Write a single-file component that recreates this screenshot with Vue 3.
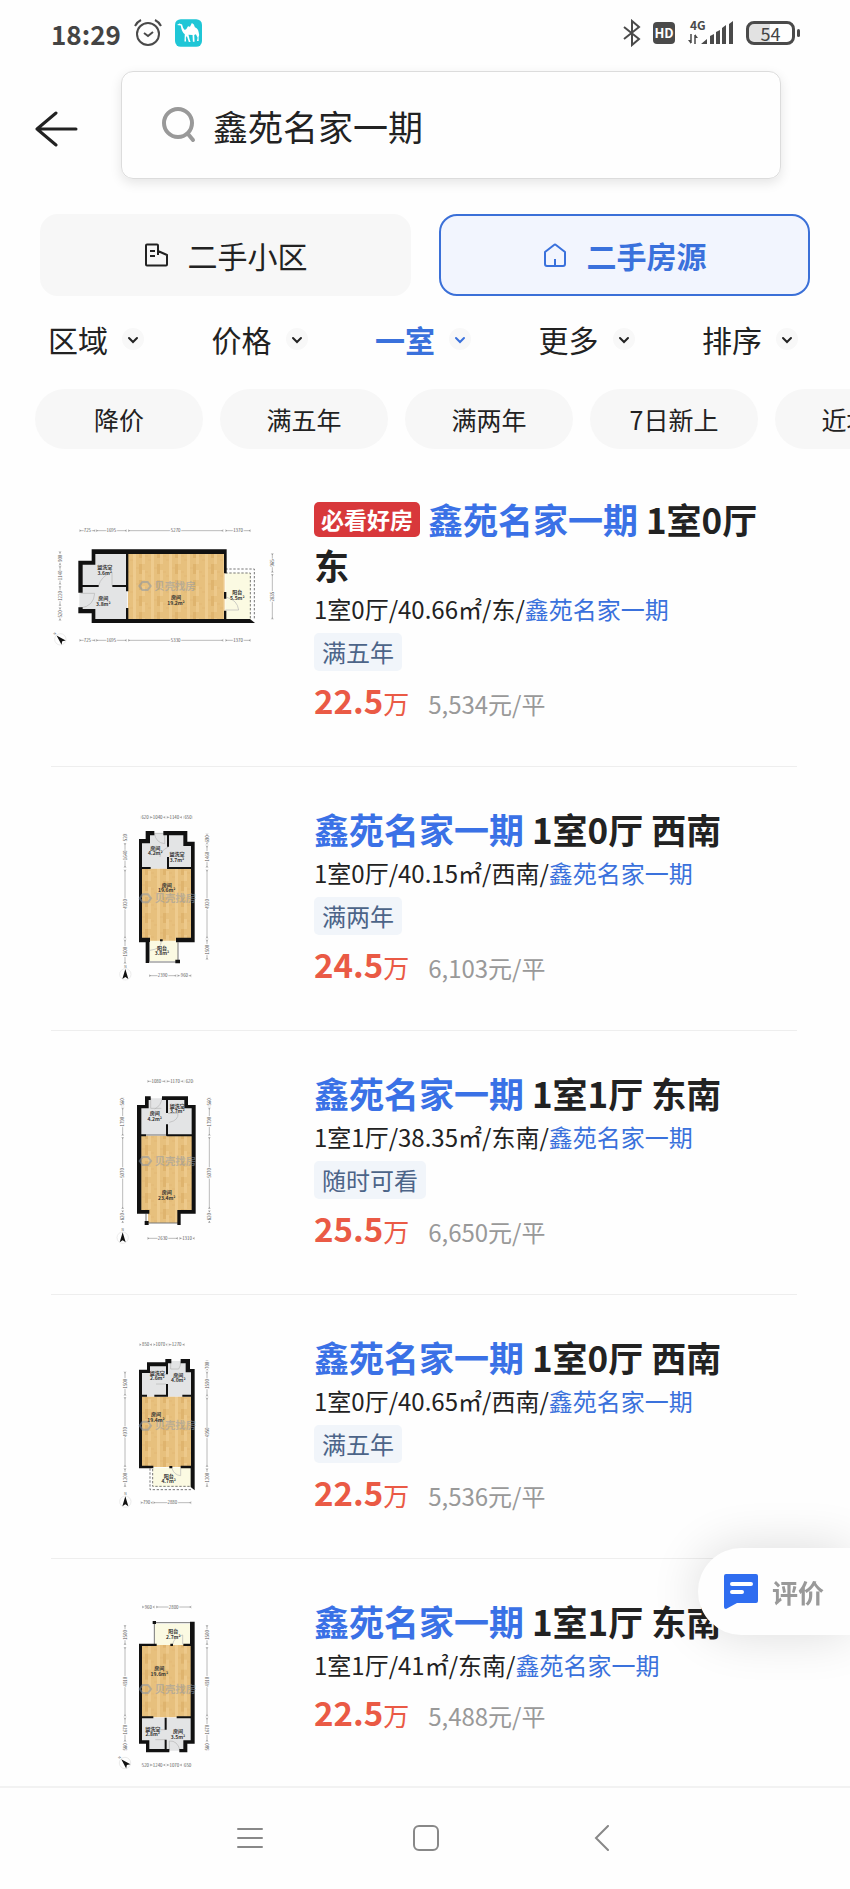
<template>
  <div class="page">
    <!-- Status bar -->
    <div class="status-bar">
      <span class="time">18:29</span>
      <svg class="status-icon" viewBox="0 0 28 28" width="28" height="28" fill="none" stroke="#4a4a4a" stroke-width="2">
        <circle cx="14" cy="15" r="11" />
        <path d="M10 14l4 3 5-4M1 7q2-4 6-6M27 7q-2-4-6-6" />
      </svg>
      <svg class="status-icon" viewBox="0 0 80 82" width="27" height="28">
        <rect width="80" height="82" rx="17" fill="#1fc6d6" />
        <path d="M6 17l7-4 8 3q2 12 8 16 6-2 9-10 4-2 6 1l6-12q7 3 9 13 9 3 11 14 3 9 0 15v12h-5l2-10-5-10-5 2 1 20h-5l-1-20-12-1 3 13 3 9h-5l-6-18-3 5 1 11h-5l1-21q-9-6-12-26z" fill="#fff" />
      </svg>
      <span class="spacer"></span>
      <svg viewBox="0 0 18 28" width="18" height="28" fill="none" stroke="#4a4a4a" stroke-width="2">
        <path d="M1 8l15 12-7 6V2l7 6L1 20" />
      </svg>
      <span class="hd">HD</span>
      <svg viewBox="0 0 48 28" width="48" height="28" fill="#4a4a4a">
        <text x="3" y="11" font-size="12" font-weight="700">4G</text>
        <path d="M4 15v9M8 16v9" stroke="#4a4a4a" stroke-width="1.5" />
        <path d="M1 21h3v4zM8 15l3 4H8zM14 25l6-5v5zM23 17l4-2v10h-4zM29 13l4-2v14h-4zM35 9l4-3v19h-4zM42 5l4-3v23h-4z" />
      </svg>
      <div class="battery"><span>54</span></div>
    </div>

    <!-- Search -->
    <header class="search-row">
      <button type="button" class="back-btn" aria-label="返回">
        <svg viewBox="0 0 44 38" width="44" height="38" fill="none" stroke="#222" stroke-width="3" stroke-linecap="round" stroke-linejoin="round">
          <path d="M21 3L2 19l19 16M2 19h39" />
        </svg>
      </button>
      <label class="search-box">
        <svg viewBox="0 0 34 36" width="34" height="36" fill="none" stroke="#999" stroke-width="4" stroke-linecap="round">
          <circle cx="16" cy="16" r="14" />
          <path d="M26 27l5 6" />
        </svg>
        <input v-model="keyword" type="text" aria-label="搜索" />
      </label>
    </header>

    <!-- Tabs -->
    <nav class="tabs">
      <button type="button" class="tab" :class="{ active: activeTab === 'community' }" @click="activeTab = 'community'">
        <svg viewBox="0 0 24 24" width="24" height="24" fill="none" stroke="currentColor" stroke-width="2" stroke-linejoin="round">
          <path d="M14 12V2.500q0-1-1-1H3q-1 0-1 1v19q0 1 1 1h19q1 0 1-1V12l-9-4M6 8h5M6 13h5" />
        </svg>
        二手小区
      </button>
      <button type="button" class="tab" :class="{ active: activeTab === 'house' }" @click="activeTab = 'house'">
        <svg viewBox="0 0 24 24" width="24" height="24" fill="none" stroke="currentColor" stroke-width="2" stroke-linejoin="round">
          <path d="M2 9l9-7q1-1 2 0l9 7v12q0 2-2 2H4q-2 0-2-2zM12 16v6" />
        </svg>
        二手房源
      </button>
    </nav>

    <!-- Filters -->
    <div class="filters">
      <label v-for="filter in filters" :key="filter" class="filter" :class="{ selected: filter === '一室' }">
        <select :aria-label="filter">
          <option>{{ filter }}</option>
        </select>
        <svg viewBox="0 0 22 22" width="22" height="22" fill="none">
          <circle cx="11" cy="11" r="11" fill="#f8f8f8" />
          <path d="M7 10l4 4 4-4" stroke="currentColor" stroke-width="2" stroke-linecap="round" />
        </svg>
      </label>
    </div>

    <!-- Quick tags -->
    <div class="chips">
      <button v-for="chip in chips" :key="chip" type="button" class="chip">{{ chip }}</button>
    </div>

    <!-- House list -->
    <ul class="house-list">
      <li v-for="(house, index) in houses" :key="index" class="house">
        <svg class="plan" :viewBox="house.plan.box" role="img" aria-label="户型图">
          <defs>
            <pattern :id="'wood' + index" width="54" height="48" patternUnits="userSpaceOnUse">
              <rect width="54" height="48" fill="#e7c07d" />
              <rect x="9" width="9" height="48" fill="#eecb8e" />
              <rect x="27" width="9" height="30" fill="#dfb46e" />
              <rect x="36" y="18" width="9" height="30" fill="#edc98b" />
              <path d="M18 12h9M0 36h9M45 24h9" stroke="#d8ab65" />
            </pattern>
          </defs>
          <path :d="house.plan.tile" fill="#e3e4e5" />
          <path :d="house.plan.balcony" fill="#fbfae2" />
          <path :d="house.plan.wood" :fill="'url(#wood' + index + ')'" />
          <path :d="house.plan.doors" fill="none" stroke="#b5b5b5" stroke-width="2" />
          <path :d="house.plan.rail" fill="none" stroke="#777" stroke-width="3" :stroke-dasharray="house.plan.dashed ? '7 5' : 'none'" />
          <path :d="house.plan.walls" fill="#111" />
          <g :transform="`translate(${house.plan.mark})`" opacity="0.5">
            <path d="M-17 0L-8 -12H8L17 0 8 12H-8Z" fill="none" stroke="#8294aa" stroke-width="6" />
            <text x="28" y="11" font-size="31" font-weight="700" fill="#8c98a8">贝壳找房</text>
          </g>
          <g v-for="room in house.plan.rooms" :key="room.join()" text-anchor="middle" font-size="15" font-weight="700" fill="#333">
            <text :x="room[0]" :y="room[1]">{{ room[2] }}</text>
            <text :x="room[0]" :y="room[1] + 16">{{ room[3] }}</text>
          </g>
          <g v-for="dim in house.plan.dims" :key="dim.join()" :transform="`translate(${dim[0]} ${dim[1]}) rotate(${dim[2]})`">
            <path :d="`M0 0H${dim[3]}`" stroke="#999" stroke-width="2" />
            <path :d="`M0 -3L5 0 0 3M${dim[3]} -3l-5 3 5 3`" fill="none" stroke="#666" />
            <text :x="dim[3] / 2" y="5" text-anchor="middle" font-size="13" class="dim-text">{{ dim[4] }}</text>
          </g>
          <g :transform="house.plan.compass">
            <circle r="17" fill="none" stroke="#e3e3e3" stroke-width="2" />
            <path d="M0 -16L9 14 0 8 -9 14Z" fill="#111" />
            <text y="-20" text-anchor="middle" font-size="10" fill="#555">N</text>
          </g>
        </svg>

        <div class="info">
          <h3 class="title">
            <span v-if="house.badge" class="badge">{{ house.badge }}</span>
            <a href="#"><em>鑫苑名家一期</em> {{ house.title }}</a>
          </h3>
          <p class="desc">{{ house.desc }}/<a href="#">鑫苑名家一期</a></p>
          <span v-if="house.tag" class="tag">{{ house.tag }}</span>
          <p class="price">
            <strong>{{ house.total }}</strong><span class="unit">万</span>
            <span class="avg">{{ house.avg }}元/平</span>
          </p>
        </div>
      </li>
    </ul>

    <button type="button" class="feedback">
      <svg viewBox="0 0 34 35" width="34" height="35">
        <path d="M2 0h30q2 0 2 2v25q0 2-2 2H13L2 35q-2 0-2-2V2q0-2 2-2z" fill="#2f6df0" />
        <path d="M8 10h19M8 18h10" stroke="#fff" stroke-width="4" stroke-linecap="round" />
      </svg>
      评价
    </button>

    <!-- System navigation -->
    <footer class="system-nav">
      <button type="button" aria-label="菜单">
        <svg viewBox="0 0 26 26" width="26" height="26"><path d="M1 4h24M1 13h24M1 22h24" /></svg>
      </button>
      <button type="button" aria-label="主页">
        <svg viewBox="0 0 26 26" width="26" height="26"><rect x="1" y="1" width="24" height="24" rx="5" /></svg>
      </button>
      <button type="button" aria-label="后退">
        <svg viewBox="0 0 26 26" width="26" height="26"><path d="M19 1L7 13l12 12" /></svg>
      </button>
    </footer>
  </div>
</template>

<script setup>
import { ref } from 'vue';

const keyword = ref('鑫苑名家一期');
const activeTab = ref('house');

const filters = ['区域', '价格', '一室', '更多', '排序'];
const chips = ['降价', '满五年', '满两年', '7日新上', '近地铁'];

// Floor plans: rooms are [x, y, name, area], dims are [x, y, angle, length, value]
const planEast = {
  box: '33 -6 696 528',
  tile: 'M122 188H160V156H262V360H160V330H118V260H122Z',
  balcony: 'M556 218H632V360H556Z',
  wood: 'M264 160H554V360H264Z',
  doors: 'M122 280H164Q162 318 122 324M176 257Q182 230 216 216V257M556 330H596Q592 300 560 292',
  rail: 'M556 207H643V360M556 219H631V358',
  dashed: true,
  walls: 'M155 148H560V220H552V162H166V194H128V278H115V182H155ZM115 322H128V327H166V357H630L645 369H155V340H115ZM258 160h7v114h-7ZM258 324h7v36h-7ZM126 255h50v6h-50ZM217 255h44v6h-44ZM552 276h7v20h-7ZM552 332h7v28h-7Z',
  mark: '315 258',
  rooms: [[194, 208, '盥洗室', '3.6m²'], [190, 301, '房间', '3.8m²'], [408, 298, '房间', '19.2m²'], [592, 283, '阳台', '5.5m²']],
  dims: [
    [118, 92, 0, 48, '725'], [168, 92, 0, 92, '1695'], [264, 92, 0, 286, '5270'], [556, 92, 0, 76, '1370'],
    [118, 421, 0, 48, '725'], [168, 421, 0, 92, '1695'], [264, 421, 0, 286, '5330'], [556, 421, 0, 76, '1370'],
    [60, 196, -90, 42, '900'], [60, 254, -90, 56, '1140'], [60, 318, -90, 60, '1220'], [60, 362, -90, 40, '520'],
    [697, 218, -90, 58, '965'], [697, 358, -90, 136, '2835']
  ],
  compass: 'translate(61 418) rotate(-45)'
};

const planSouthwest = {
  box: '-147 21 696 528',
  tile: 'M120 120H144V96H255V128H278V203H120Z',
  balcony: 'M145 416H234V480H145Z',
  wood: 'M124 203H275V419H124Z',
  doors: 'M163 97H194V128Q168 126 163 97M205 138Q180 150 180 168M184 420Q184 444 150 448',
  rail: 'M146 483H238M148 424V482M234 424V480',
  dashed: false,
  walls: 'M117 114H137V90H163V103H150V127H126V410H150V424H117ZM190 90H262V122H284V424H228V410H273V135H250V103H190ZM201 97h6v40h-6ZM201 168h6v34h-6ZM124 198h28v6h-28ZM201 198h74v6h-74ZM137 420h10v66h-10ZM226 476h14v11h-14ZM180 415h8v6h-8Z',
  mark: '136 292',
  rooms: [[166, 147, '房间', '4.2m²'], [231, 166, '盥洗室', '3.7m²'], [200, 257, '房间', '19.6m²'], [186, 447, '阳台', '3.8m²']],
  dims: [
    [122, 49, 0, 26, '620'], [150, 49, 0, 46, '1040'], [200, 49, 0, 46, '1140'], [250, 49, 0, 28, '650'],
    [147, 524, 0, 82, '2390'], [232, 524, 0, 42, '960'],
    [75, 122, -90, 24, '520'], [75, 200, -90, 74, '1640'], [75, 412, -90, 206, '4920'], [75, 488, -90, 72, '1500'],
    [321, 130, -90, 32, '690'], [321, 200, -90, 66, '1460'], [321, 412, -90, 206, '4920'], [321, 476, -90, 60, '1500']
  ],
  compass: 'translate(76 520)'
};

const planSoutheast = {
  box: '-147 21 696 528',
  tile: 'M117 126H140V100H257V126H280V210H117Z',
  balcony: '',
  wood: 'M120 212H277V440H238V474H144V440H120Z',
  doors: 'M152 98V130H184M186 98Q184 122 164 132M204 145H234Q236 166 208 172',
  rail: 'M146 474H234M138 210H200M138 446V470',
  dashed: false,
  walls: 'M111 120H135V94H152V105H146V130H124V435H148V446H111ZM186 94H264V120H287V446H242V480H232V435H275V130H253V105H186ZM198 100h6v44h-6ZM198 178h6v34h-6ZM120 208h18v6h-18ZM200 208h78v6h-78ZM134 468h12v12h-12Z',
  mark: '136 288',
  rooms: [[164, 151, '房间', '4.2m²'], [232, 128, '盥洗室', '3.7m²'], [200, 388, '房间', '23.4m²']],
  dims: [
    [142, 49, 0, 54, '1080'], [200, 49, 0, 50, '1170'], [254, 49, 0, 28, '620'],
    [142, 520, 0, 92, '2630'], [238, 520, 0, 46, '1310'],
    [68, 124, -90, 26, '560'], [68, 212, -90, 84, '1790'], [68, 432, -90, 216, '5070'], [68, 474, -90, 38, '820'],
    [328, 124, -90, 26, '560'], [328, 212, -90, 84, '1790'], [328, 432, -90, 216, '5070'], [328, 474, -90, 38, '820']
  ],
  compass: 'translate(68 518)'
};

const planSouthwestB = {
  box: '-147 21 696 528',
  tile: 'M120 127H145V105H204V96H262V126H278V203H120Z',
  balcony: 'M158 416H274V474H158Z',
  wood: 'M124 203H275V414H124Z',
  doors: 'M212 96V120H236Q242 112 242 98M198 136H170M198 165H168M216 418Q222 438 242 440V418',
  rail: 'M158 420V472H274M150 418V482H278',
  dashed: true,
  walls: 'M117 122H141V100H200V112H150V132H126V410H160V418H117ZM196 90H214V103H204V112H196ZM242 90H270V120H284V484L272 474V418H242V410H273V130H257V103H242ZM198 100h6v36h-6ZM198 165h6v36h-6ZM124 197h17v6h-17ZM163 197h41v6h-41ZM247 197h28v6h-28ZM208 411h9v7h-9Z',
  mark: '136 290',
  rooms: [[172, 137, '盥洗室', '2.6m²'], [235, 143, '房间', '4.0m²'], [168, 262, '房间', '19.4m²'], [206, 446, '阳台', '4.7m²']],
  dims: [
    [118, 47, 0, 38, '850'], [160, 47, 0, 42, '1070'], [206, 47, 0, 48, '1270'],
    [122, 521, 0, 36, '790'], [160, 521, 0, 114, '2880'],
    [75, 200, -90, 72, '1500'], [75, 414, -90, 210, '4970'], [75, 474, -90, 56, '1200'],
    [321, 124, -90, 30, '700'], [321, 202, -90, 74, '1590'], [321, 414, -90, 208, '4950'], [321, 474, -90, 56, '1200']
  ],
  compass: 'translate(76 518)'
};

const planSoutheastB = {
  box: '-147 31 696 528',
  tile: 'M121 384H278V458H256V483H143V458H121Z',
  balcony: 'M164 102H274V166H164Z',
  wood: 'M124 166H275V383H124Z',
  doors: 'M218 164Q222 142 248 136V164M208 482V454Q232 452 240 482M196 420H172M196 450H166',
  rail: 'M160 99H276M163 99V164',
  dashed: false,
  walls: 'M270 96H284V462H262V488H238V478H250V452H272V169H250V162H270ZM117 162H170V169H126V452H148V478H208V488H138V462H117ZM124 380h36v6h-36ZM230 380h44v6h-44ZM194 384h6v36h-6ZM194 450h6v32h-6ZM211 162h8v7h-8ZM158 94h10v9h-10Z',
  mark: '136 298',
  rooms: [[220, 131, '阳台', '2.7m²'], [178, 242, '房间', '19.6m²'], [158, 423, '盥洗室', '2.8m²'], [234, 431, '房间', '3.5m²']],
  dims: [
    [126, 52, 0, 38, '960'], [168, 52, 0, 106, '2800'],
    [124, 526, 0, 24, '520'], [150, 526, 0, 46, '1240'], [200, 526, 0, 46, '1070'], [250, 526, 0, 26, '650'],
    [75, 166, -90, 60, '1500'], [75, 380, -90, 208, '4910'], [75, 456, -90, 72, '1670'], [75, 484, -90, 24, '580'],
    [321, 166, -90, 60, '1500'], [321, 380, -90, 208, '4910'], [321, 456, -90, 72, '1670'], [321, 484, -90, 24, '580']
  ],
  compass: 'translate(75 520) rotate(-45)'
};

const houses = [
  { badge: '必看好房', title: '1室0厅 东', desc: '1室0厅/40.66㎡/东', tag: '满五年', total: '22.5', avg: '5,534', plan: planEast },
  { title: '1室0厅 西南', desc: '1室0厅/40.15㎡/西南', tag: '满两年', total: '24.5', avg: '6,103', plan: planSouthwest },
  { title: '1室1厅 东南', desc: '1室1厅/38.35㎡/东南', tag: '随时可看', total: '25.5', avg: '6,650', plan: planSoutheast },
  { title: '1室0厅 西南', desc: '1室0厅/40.65㎡/西南', tag: '满五年', total: '22.5', avg: '5,536', plan: planSouthwestB },
  { title: '1室1厅 东南', desc: '1室1厅/41㎡/东南', total: '22.5', avg: '5,488', plan: planSoutheastB }
];
</script>

<style>
body {
  margin: 0;
  background: #fefefe;
}
</style>

<style scoped>
.page {
  display: flex;
  flex-direction: column;
  min-height: 100vh;
  overflow-x: hidden;
  color: #222;
  background: #fefefe;
  font-family: "Noto Sans CJK SC", sans-serif;
}

button,
input,
select {
  padding: 0;
  border: 0;
  color: inherit;
  background: none;
  font-family: inherit;
}

svg {
  flex: none;
}

a {
  color: inherit;
  text-decoration: none;
}

.status-bar {
  display: flex;
  align-items: center;
  height: 66px;
  padding: 0 50px 0 51px;
  color: #444;
}

.time {
  font-size: 26px;
  font-weight: 700;
}

.status-icon {
  margin-left: 13px;
}

.spacer {
  flex: 1;
}

.hd {
  width: 22px;
  margin: 0 12px;
  border-radius: 4px;
  color: #fff;
  background: #4a4a4a;
  font-size: 13px;
  font-weight: 700;
  line-height: 22px;
  text-align: center;
}

.battery {
  position: relative;
  width: 43px;
  margin: 0 5px 0 11px;
  border: 3px solid #4a4a4a;
  border-radius: 8px;
  background: linear-gradient(90deg, #e2e2e2 50%, #fefefe 50%);
  font-size: 18px;
  line-height: 18px;
  text-align: center;
}

.battery::after {
  content: "";
  position: absolute;
  top: 5px;
  right: -8px;
  width: 3px;
  height: 8px;
  border-radius: 2px;
  background: #4a4a4a;
}

.search-row {
  display: flex;
  align-items: center;
  gap: 42px;
  margin-top: 5px;
  padding: 0 69px 0 35px;
}

.back-btn {
  display: flex;
  padding-top: 8px;
}

.search-box {
  display: flex;
  flex: 1;
  align-items: center;
  gap: 17px;
  height: 106px;
  padding: 0 40px;
  border: 1px solid #dcdcdc;
  border-radius: 12px;
  box-shadow: 0 4px 12px rgba(0, 0, 0, 0.1);
}

.search-box input {
  flex: 1;
  min-width: 0;
  outline: none;
  font-size: 35px;
}

.tabs {
  display: flex;
  gap: 28px;
  margin-top: 35px;
  padding: 0 40px;
}

.tab {
  display: flex;
  flex: 1;
  align-items: center;
  justify-content: center;
  gap: 20px;
  height: 82px;
  border: 2px solid #f7f7f7;
  border-radius: 18px;
  background: #f7f7f7;
  font-size: 30px;
}

.tab.active {
  border-color: #3b70d8;
  color: #3a71dc;
  background: #f2f5fe;
  font-weight: 700;
}

.filters {
  display: flex;
  justify-content: space-between;
  margin-top: 21px;
  padding: 0 52px 0 48px;
}

.filter {
  display: flex;
  align-items: center;
  gap: 14px;
}

.filter select {
  appearance: none;
  font-size: 30px;
  line-height: 44px;
}

.filter.selected {
  color: #3a71dc;
}

.filter.selected select {
  font-weight: 700;
}

.chips {
  display: flex;
  gap: 17px;
  margin-top: 28px;
  padding-left: 35px;
  overflow: hidden;
}

.chip {
  flex: none;
  width: 168px;
  height: 60px;
  border-radius: 30px;
  background: #f7f7f7;
  font-size: 25px;
}

.house-list {
  margin: 8px 0 0;
  padding: 0 53px 0 51px;
  list-style: none;
}

.house {
  display: flex;
  gap: 31px;
  padding: 39px 0 42px;
  border-bottom: 1px solid #eee;
}

.house:last-child {
  padding-bottom: 0;
  border-bottom: 0;
}

.plan {
  width: 232px;
  height: 176px;
  margin-top: 2px;
}

.dim-text {
  fill: #555;
  stroke: #fefefe;
  stroke-width: 6px;
  paint-order: stroke;
}

.info {
  flex: 1;
  padding-right: 20px;
}

.title {
  margin: 0;
  font-size: 35px;
  font-weight: 700;
  line-height: 46px;
}

.title em {
  color: #3a71e6;
  font-style: normal;
}

.badge {
  display: inline-block;
  margin-right: 4px;
  padding: 0 7px;
  border-radius: 5px;
  color: #fff;
  background: #d8383b;
  font-size: 23px;
  font-weight: 700;
  line-height: 35px;
  vertical-align: 5px;
}

.badge + a {
  margin-left: 4px;
}

.desc {
  margin: 0;
  font-size: 24px;
  line-height: 42px;
}

.desc a {
  color: #3a71dc;
}

.tag {
  display: table;
  margin: 3px 0 9px;
  padding: 0 8px;
  border-radius: 5px;
  color: #4c6488;
  background: #f1f5fa;
  font-size: 24px;
  line-height: 38px;
}

.price {
  display: flex;
  align-items: baseline;
  margin: 6px 0 0;
  line-height: 40px;
}

.price strong,
.unit {
  color: #ea5a45;
}

.price strong {
  font-size: 33px;
}

.unit {
  font-size: 26px;
}

.avg {
  margin-left: 19px;
  color: #999;
  font-size: 24px;
}

.feedback {
  position: fixed;
  right: 0;
  bottom: 254px;
  display: flex;
  align-items: center;
  gap: 14px;
  height: 87px;
  padding: 0 26px;
  border-radius: 44px 0 0 44px;
  color: #999;
  background: #fefefe;
  box-shadow: 0 0 50px rgba(0, 0, 0, 0.14);
  font-size: 26px;
  font-weight: 700;
}

.system-nav {
  display: flex;
  align-items: center;
  justify-content: center;
  gap: 150px;
  height: 99px;
  margin-top: auto;
  padding: 0 0 2px 2px;
  border-top: 2px solid #f2f2f2;
}

.system-nav button {
  display: flex;
}

.system-nav svg {
  fill: none;
  stroke: #888;
  stroke-width: 2;
  stroke-linecap: round;
}
</style>
